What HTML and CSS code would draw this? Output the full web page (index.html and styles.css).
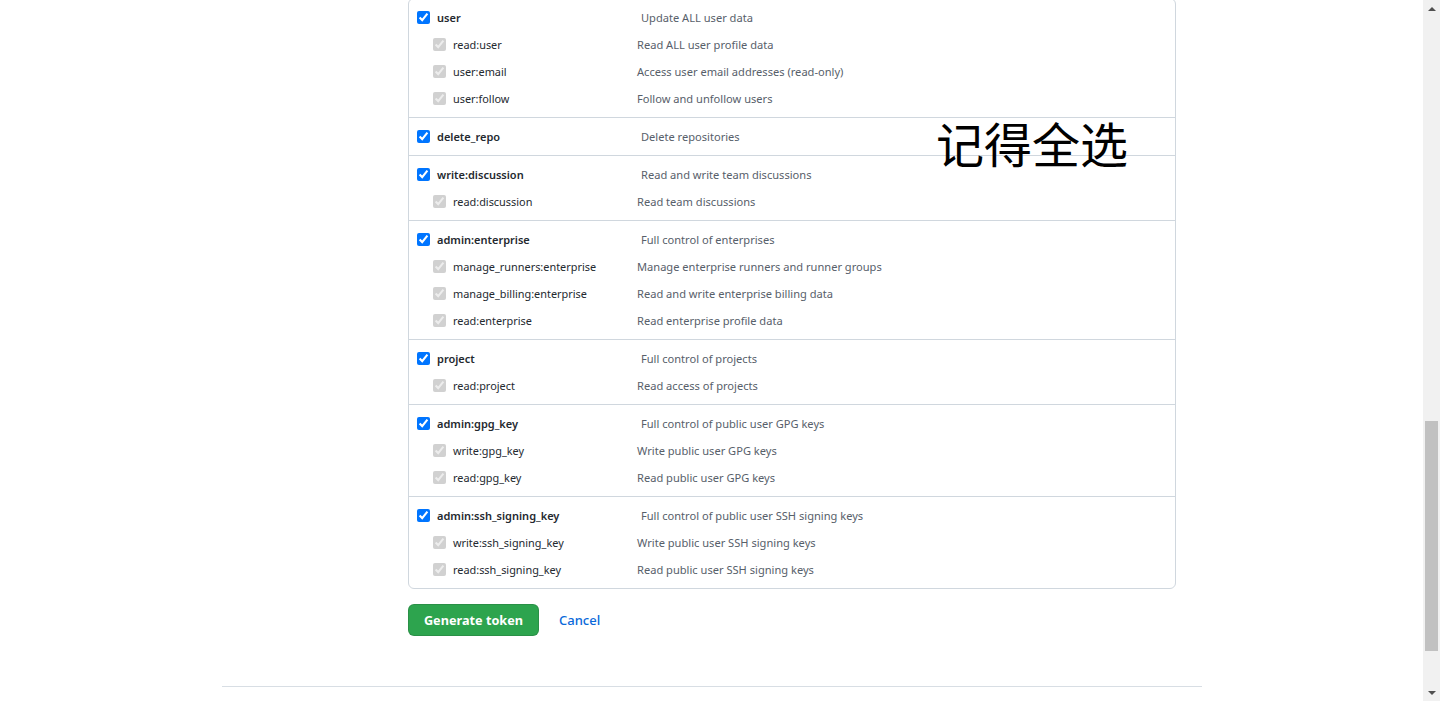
FILE: index.html
```html
<!DOCTYPE html>
<html lang="en">
<head>
<meta charset="utf-8">
<title>New personal access token</title>
<link rel="stylesheet" href="styles.css">
</head>
<body>
<div class="viewport">
  <div class="container">
    <div class="form">
      <div class="scopes">
        <div class="group">
          <label class="row main"><input type="checkbox" checked><span class="name">user</span><span class="desc">Update ALL user data</span></label>
          <label class="row sub"><input type="checkbox" checked disabled><span class="name">read:user</span><span class="desc">Read ALL user profile data</span></label>
          <label class="row sub"><input type="checkbox" checked disabled><span class="name">user:email</span><span class="desc">Access user email addresses (read-only)</span></label>
          <label class="row sub"><input type="checkbox" checked disabled><span class="name">user:follow</span><span class="desc">Follow and unfollow users</span></label>
        </div>
        <div class="group">
          <label class="row main"><input type="checkbox" checked><span class="name">delete_repo</span><span class="desc">Delete repositories</span></label>
        </div>
        <div class="group">
          <label class="row main"><input type="checkbox" checked><span class="name">write:discussion</span><span class="desc">Read and write team discussions</span></label>
          <label class="row sub"><input type="checkbox" checked disabled><span class="name">read:discussion</span><span class="desc">Read team discussions</span></label>
        </div>
        <div class="group">
          <label class="row main"><input type="checkbox" checked><span class="name">admin:enterprise</span><span class="desc">Full control of enterprises</span></label>
          <label class="row sub"><input type="checkbox" checked disabled><span class="name">manage_runners:enterprise</span><span class="desc">Manage enterprise runners and runner groups</span></label>
          <label class="row sub"><input type="checkbox" checked disabled><span class="name">manage_billing:enterprise</span><span class="desc">Read and write enterprise billing data</span></label>
          <label class="row sub"><input type="checkbox" checked disabled><span class="name">read:enterprise</span><span class="desc">Read enterprise profile data</span></label>
        </div>
        <div class="group">
          <label class="row main"><input type="checkbox" checked><span class="name">project</span><span class="desc">Full control of projects</span></label>
          <label class="row sub"><input type="checkbox" checked disabled><span class="name">read:project</span><span class="desc">Read access of projects</span></label>
        </div>
        <div class="group">
          <label class="row main"><input type="checkbox" checked><span class="name">admin:gpg_key</span><span class="desc">Full control of public user GPG keys</span></label>
          <label class="row sub"><input type="checkbox" checked disabled><span class="name">write:gpg_key</span><span class="desc">Write public user GPG keys</span></label>
          <label class="row sub"><input type="checkbox" checked disabled><span class="name">read:gpg_key</span><span class="desc">Read public user GPG keys</span></label>
        </div>
        <div class="group">
          <label class="row main"><input type="checkbox" checked><span class="name">admin:ssh_signing_key</span><span class="desc">Full control of public user SSH signing keys</span></label>
          <label class="row sub"><input type="checkbox" checked disabled><span class="name">write:ssh_signing_key</span><span class="desc">Write public user SSH signing keys</span></label>
          <label class="row sub"><input type="checkbox" checked disabled><span class="name">read:ssh_signing_key</span><span class="desc">Read public user SSH signing keys</span></label>
        </div>
      </div>
      <div class="actions">
        <button class="btn-primary" type="button">Generate token</button>
        <a class="cancel" href="#">Cancel</a>
      </div>
    </div>
    <div class="footer-line"></div>
  </div>
  <div class="note">记得全选</div>
</div>
<div class="scrollbar">
  <div class="arrow-btn"><span class="tri up"></span></div>
  <div class="track"><div class="thumb"></div></div>
  <div class="arrow-btn"><span class="tri down"></span></div>
</div>
</body>
</html>
```

FILE: styles.css
```css
html, body {
  margin: 0;
  padding: 0;
  height: 701px;
  overflow: hidden;
  background: #ffffff;
}

body {
  display: flex;
  font-family: "Noto Sans", "Segoe UI", "Liberation Sans", sans-serif;
  color: #24292f;
}

.viewport {
  position: relative;
  flex: 1;
  height: 701px;
  overflow: hidden;
}

.container {
  width: 980px;
  margin: 0 0 0 222px;
}

.form {
  margin-left: 186px;
  width: 768px;
}

.scopes {
  margin-top: -2px;
  border: 1px solid #d0d7de;
  border-radius: 6px;
}

.group {
  padding: 8px 0;
  border-bottom: 1px solid #d0d7de;
}

.group:last-child {
  border-bottom: none;
}

.row {
  display: flex;
  align-items: center;
  height: 21px;
  font-size: 11.1px;
}

.row input {
  width: 13px;
  height: 13px;
  margin: 0 7px 0 0;
  flex: none;
}

.row.main {
  padding-left: 8px;
}

.row.sub {
  padding-left: 24px;
  margin-top: 6px;
}

.row .name {
  flex: none;
  color: #24292f;
}

.row.main .name {
  width: 204px;
  font-weight: 600;
  font-size: 11px;
}

.row.sub .name {
  width: 184px;
  font-size: 10.9px;
}

.row .desc {
  color: #57606a;
}

.actions {
  display: flex;
  align-items: center;
  margin-top: 15px;
  height: 32px;
}

.btn-primary {
  width: 131px;
  height: 32px;
  border: 1px solid rgba(27, 31, 36, 0.15);
  border-radius: 6px;
  background: #2da44e;
  color: #ffffff;
  font-family: "Noto Sans", "Segoe UI", sans-serif;
  font-size: 12.7px;
  font-weight: 700;
  padding: 0;
}

.cancel {
  margin-left: 20px;
  color: #0969da;
  font-size: 13px;
  font-weight: 500;
  text-decoration: none;
}

.footer-line {
  margin-top: 50px;
  height: 1px;
  background: #d8dee4;
}

.note {
  position: absolute;
  left: 936px;
  top: 118px;
  font-family: "Noto Sans CJK SC", sans-serif;
  font-size: 48px;
  line-height: 48px;
  color: #000000;
}

.scrollbar {
  width: 17px;
  height: 701px;
  background: #f1f1f1;
  display: flex;
  flex-direction: column;
  flex: none;
}

.arrow-btn {
  height: 17px;
  display: flex;
  align-items: center;
  justify-content: center;
  flex: none;
}

.track {
  flex: 1;
  padding: 0 2px;
}

.thumb {
  margin-top: 404px;
  height: 230px;
  background: #c1c1c1;
}

.tri {
  width: 0;
  height: 0;
  border-left: 4px solid transparent;
  border-right: 4px solid transparent;
}

.tri.up {
  border-bottom: 4px solid #505050;
}

.tri.down {
  border-top: 4px solid #505050;
}
```
